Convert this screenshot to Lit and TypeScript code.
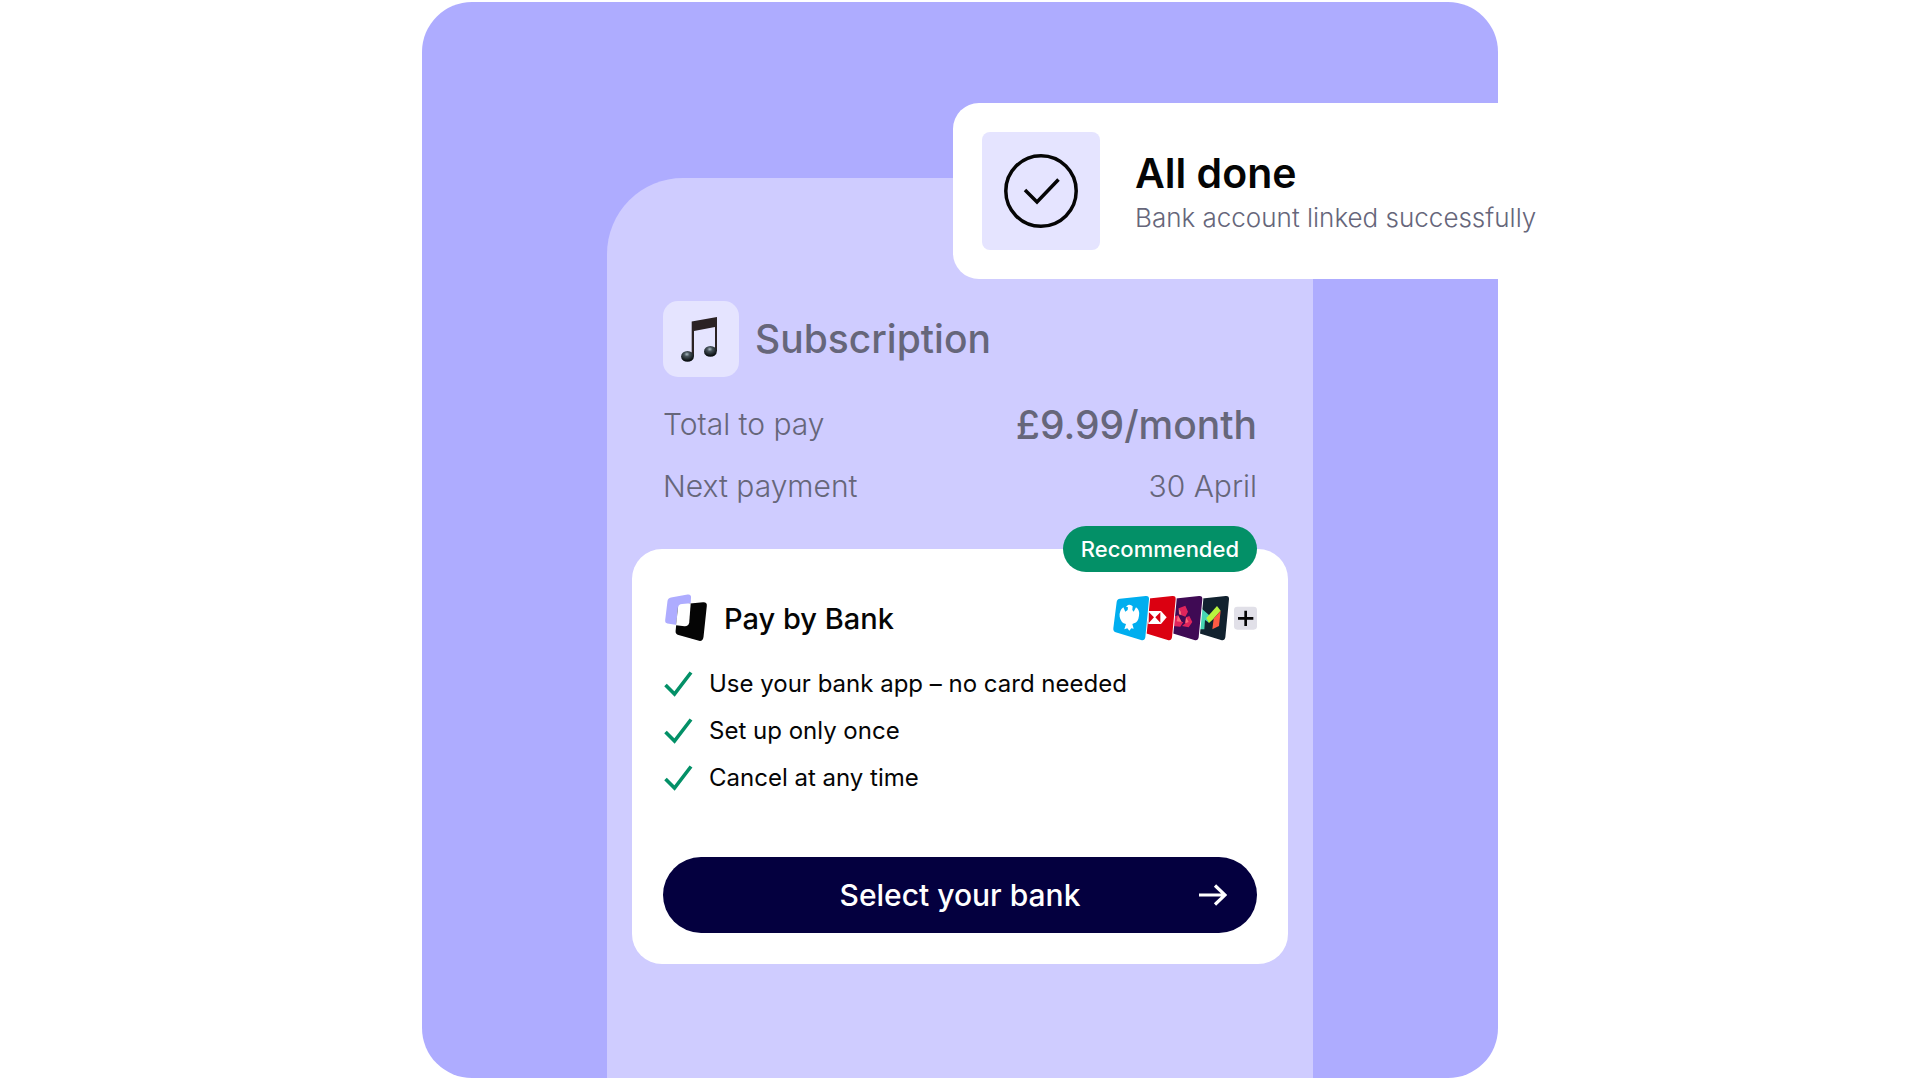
import { LitElement, html, css, svg } from "lit";
import { customElement } from "lit/decorators.js";

const TILE =
  "M60 54 L137 46 Q148 45 147 56 L136 170 Q134 181 123 178 L47 155 Q39 152 40 143 L50 64 Q51 55 60 54Z";

const tick = html`<svg class="tick" viewBox="0 0 30 28" aria-hidden="true">
  <path d="M2.500 15 L11.500 24 L28 2.500" fill="none" stroke="#039067" stroke-width="3.600" />
</svg>`;

@customElement("bank-logos")
export class BankLogos extends LitElement {
  static styles = css`
    :host { display: block; }
    .logos { display: block; width: 145px; height: 48px; }
  `;

  private tile(index: number, fill: string, mark: unknown) {
    return svg`<g>
      <path d=${TILE} transform="translate(${index * 80} 0)" fill=${fill} stroke="#fff" stroke-width="6" paint-order="stroke" />
      ${mark}
    </g>`;
  }

  render() {
    return html`<svg class="logos" viewBox="36 40 435 144" role="img" aria-label="Supported banks and more">
      ${this.tile(3, "#12222f", svg`
        <path d="M300 80 L327 103 L327 126 L315 118 L313 146 L298 146Z" fill="#46d5b3" />
        <path d="M327 103 L351 76 L362 90 L340 115 L327 127 L319 112Z" fill="#b8f53d" />
        <path d="M362 90 L357 136 L337 146 L341 114Z" fill="#ff5a43" />`)}
      ${this.tile(2, "#3f0a54", svg`
        <path d="M236 83 L256 75 L264 93 L256 108 L245 104 L242 92Z" fill="#e0245c" />
        <path d="M236 83 L242 92 L245 104 L237 101Z" fill="#ff6a78" />
        <path d="M258 110 L268 106 L277 124 L266 140 L246 136 L256 128Z" fill="#e0245c" />
        <path d="M258 110 L266 124 L256 128Z" fill="#ff6a78" />
        <path d="M220 108 L234 104 L245 124 L250 124 L241 138 L218 136Z" fill="#e0245c" />
        <path d="M234 104 L245 124 L230 122Z" fill="#ff6a78" />`)}
      ${this.tile(1, "#db0011", svg`
        <path d="M145 91 H183 L200 110 L183 130 H145Z" fill="#fff" />
        <path d="M147 95 L162 110 L147 126Z M181 95 L166 110 L181 126Z" fill="#db0011" />`)}
      ${this.tile(0, "#00aeef", svg`
        <path d="M84 73 Q92 70 98 77 L97 88 L101 93 L108 80 Q120 88 117 105 Q115 124 102 128 L97 130 L101 144 L94 143 L88 150 L82 143 L73 146 L78 130 Q62 126 59 108 Q57 90 70 80 L76 93 L83 88 L84 80 L78 78Z" fill="#fff" />`)}
      <rect x="402" y="78" width="69" height="69" rx="10" fill="#e1e0e8" />
      <path d="M414 113 H460 M437 90 V136" stroke="#050505" stroke-width="8" />
    </svg>`;
  }
}

@customElement("app-root")
export class AppRoot extends LitElement {
  static styles = css`
    :host {
      display: block;
      padding: 2px;
      background: #fff;
      color: #050505;
      font-family: Inter, "Liberation Sans", sans-serif;
      line-height: 1;
    }
    * { box-sizing: border-box; }
    h1, h2, p, dl, dd, ul { margin: 0; padding: 0; }
    .panel {
      position: relative;
      display: flex;
      flex-direction: column;
      max-width: 1076px;
      min-height: calc(100vh - 4px);
      margin: 0 auto;
      padding: 176px 185px 0;
      border-radius: 50px;
      background: #aeacff;
    }
    .phone {
      flex: 1;
      padding: 123px 25px 80px;
      border-radius: 76px 76px 0 0;
      background: #cfccff;
    }
    .summary { padding: 0 31px; color: #66667a; }
    .product { display: flex; align-items: center; gap: 16px; }
    .note { flex: none; width: 76px; height: 76px; }
    .title { font-size: 39px; font-weight: 500; line-height: 48px; }
    .rows { padding-top: 16px; }
    .row {
      display: flex;
      justify-content: space-between;
      align-items: center;
      height: 62px;
      font-size: 30px;
      font-weight: 300;
    }
    .price { font-size: 39px; font-weight: 500; }
    .card {
      position: relative;
      margin-top: 32px;
      padding: 44px 31px 31px;
      border-radius: 30px;
      background: #fff;
    }
    .badge {
      position: absolute;
      top: -23px;
      right: 31px;
      padding: 0 18px;
      border-radius: 23px;
      background: #039067;
      color: #fff;
      font-size: 22px;
      font-weight: 500;
      line-height: 46px;
    }
    .head { display: flex; align-items: center; gap: 15px; }
    .brand { width: 46px; height: 50px; }
    .name { flex: 1; font-size: 29px; font-weight: 500; }
    .points { padding-top: 17px; list-style: none; }
    .point {
      display: flex;
      align-items: center;
      gap: 16px;
      height: 47px;
      font-size: 24px;
      font-weight: 400;
    }
    .tick { width: 30px; height: 28px; }
    .select {
      display: grid;
      grid-template-columns: 1fr auto 1fr;
      align-items: center;
      width: 100%;
      height: 76px;
      margin-top: 56px;
      padding: 0 30px;
      border: 0;
      border-radius: 38px;
      background: #04003f;
      color: #fff;
      font: 500 30px Inter, "Liberation Sans", sans-serif;
      cursor: pointer;
    }
    .label { grid-column: 2; }
    .arrow { justify-self: end; width: 28px; height: 22px; }
    .toast {
      position: absolute;
      top: 101px;
      left: 531px;
      display: flex;
      align-items: center;
      gap: 35px;
      padding: 29px;
      border-radius: 26px;
      background: #fff;
      white-space: nowrap;
    }
    .done { width: 118px; height: 118px; }
    .done-copy { padding-top: 4px; }
    .done-title { font-size: 41px; font-weight: 600; line-height: 50px; }
    .done-text { font-size: 26px; font-weight: 300; line-height: 40px; color: #66667a; }
  `;

  private points = [
    "Use your bank app – no card needed",
    "Set up only once",
    "Cancel at any time",
  ];

  render() {
    return html`
      <main class="panel">
        <section class="phone">
          <div class="summary">
            <div class="product">
              <svg class="note" viewBox="0 0 76 76" aria-hidden="true">
                <defs>
                  <radialGradient id="head" cx="0.45" cy="0.3" r="0.6">
                    <stop offset="0" stop-color="#a9b8c0" />
                    <stop offset="0.35" stop-color="#46525a" />
                    <stop offset="1" stop-color="#0c1114" />
                  </radialGradient>
                </defs>
                <rect width="76" height="76" rx="15" fill="#e5e4ff" />
                <path d="M28.7 20.500 L54 16 V50 H52 V26 L31 30 V55 H28.7Z" fill="#2b2224" />
                <ellipse cx="24.5" cy="55.4" rx="6.400" ry="5.400" fill="url(#head)" />
                <ellipse cx="47.4" cy="50.4" rx="6.400" ry="5.400" fill="url(#head)" />
              </svg>
              <h1 class="title">Subscription</h1>
            </div>
            <dl class="rows">
              <div class="row"><dt>Total to pay</dt><dd class="price">£9.99/month</dd></div>
              <div class="row"><dt>Next payment</dt><dd>30 April</dd></div>
            </dl>
          </div>
          <section class="card">
            <span class="badge">Recommended</span>
            <div class="head">
              <svg class="brand" viewBox="0 0 46 50" aria-hidden="true">
                <path d="M8 4.500 L24.500 1.500 Q28.500 1 28 5 L26 33 L14 32 L4.500 30.500 Q1.800 30 2.200 27 L4.500 8 Q4.800 5 8 4.500Z" fill="#aeacff" />
                <path d="M27 10.500 L40 9.300 Q44.300 9 43.800 13 L40.500 44 Q39.800 48.500 36 47.800 L15.500 42 Q12.300 41 12.600 38 L15 14Z" fill="#050505" />
                <path d="M19 11 L27.700 10.300 L26.200 29.500 Q25.500 33.500 21.500 33.300 L13 32.200 L15 14.500 Q15.500 11.300 19 11Z" fill="#fff" />
              </svg>
              <h2 class="name">Pay by Bank</h2>
              <bank-logos></bank-logos>
            </div>
            <ul class="points">
              ${this.points.map((p) => html`<li class="point">${tick}<span>${p}</span></li>`)}
            </ul>
            <button class="select" type="button">
              <span class="label">Select your bank</span>
              <svg class="arrow" viewBox="0 0 28 22" aria-hidden="true">
                <path d="M0 11 H26 M16 1.500 L26 11 L16 20.500" fill="none" stroke="#fff" stroke-width="3.200" />
              </svg>
            </button>
          </section>
        </section>
        <aside class="toast" role="status">
          <svg class="done" viewBox="0 0 118 118" aria-hidden="true">
            <rect width="118" height="118" rx="8" fill="#e5e4ff" />
            <circle cx="59" cy="59" r="35.200" fill="none" stroke="#050505" stroke-width="3.500" />
            <path d="M43 58 L55 70 L76.500 47.500" fill="none" stroke="#050505" stroke-width="3.500" />
          </svg>
          <div class="done-copy">
            <p class="done-title">All done</p>
            <p class="done-text">Bank account linked successfully</p>
          </div>
        </aside>
      </main>
    `;
  }
}
